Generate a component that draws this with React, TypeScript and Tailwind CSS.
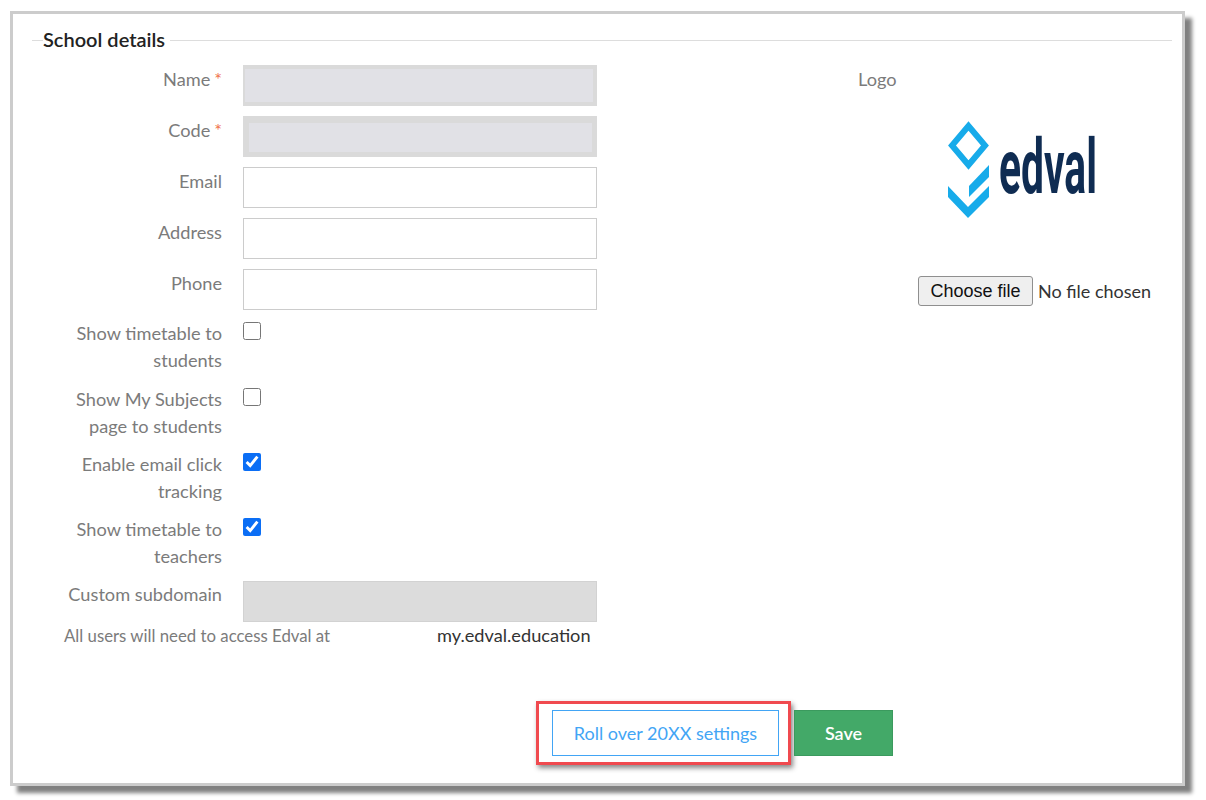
import React from 'react'

const textRows = [
  { label: 'Name', required: true, box: 'bg-[#e1e1e6] border-[#dadada] border-t-4 border-r-4 border-b-4 border-l-2' },
  { label: 'Code', required: true, box: 'bg-[#e1e1e6] border-[#dadada] border-t-[7px] border-r-[5px] border-b-[5px] border-l-[6px]' },
  { label: 'Email', box: 'bg-white border border-[#cccccc]' },
  { label: 'Address', box: 'bg-white border border-[#cccccc]' },
  { label: 'Phone', box: 'bg-white border border-[#cccccc]' },
]

const checkRows = [
  { label: 'Show timetable to students', checked: false, height: 'h-[66px]' },
  { label: 'Show My Subjects page to students', checked: false, height: 'h-[65px]' },
  { label: 'Enable email click tracking', checked: true, height: 'h-[65px]' },
  { label: 'Show timetable to teachers', checked: true, height: 'h-[65px]' },
]

function EdvalLogo() {
  return (
    <svg width="156" height="100" viewBox="0 0 156 100" className="block overflow-visible">
      <path d="M21.5 6 L38 25.5 L21.5 45 L5 25.5 Z" fill="none" stroke="#17abea" strokeWidth="6" />
      <path d="M42 45 L42 57 L22 77 L22 66 Z" fill="#17abea" />
      <path d="M1 66 L21 87 L42 66 L42 77 L21 98 L1 77 Z" fill="#17abea" />
      <text
        x="52"
        y="73"
        fontFamily="Roboto, Arial, sans-serif"
        fontSize="76"
        fontWeight="700"
        textLength="98"
        lengthAdjust="spacingAndGlyphs"
        fill="#0f2c52"
      >
        edval
      </text>
    </svg>
  )
}

export default function App() {
  return (
    <div className="w-[1206px] h-[800px] bg-white pt-[11px] pl-[10px] overflow-hidden font-['Lato',sans-serif]">
      <div className="w-[1175px] h-[775px] bg-white border-[3px] border-[#cccccc] shadow-[7px_7px_4px_#808080] flex flex-col">
        {/* Legend */}
        <div className="flex items-center h-[26px] mt-[13px] ml-[19px] mr-[10px]">
          <div className="w-[11px] h-px bg-[#dddddd]" />
          <span className="text-[20px] font-semibold text-[#222222] leading-[26px] pb-[2px]">School details</span>
          <div className="flex-1 h-px bg-[#dddddd] ml-[5px]" />
        </div>

        <div className="flex mt-[12px] pl-[49px]">
          {/* Form */}
          <div className="w-[535px] flex flex-col text-[18.2px] text-[#7b7b7b] leading-[27px]">
            {textRows.map((row) => (
              <div key={row.label} className="flex gap-[21px] h-[51px]">
                <div className="w-[160px] text-right pt-px">
                  {row.label}
                  {row.required && <span className="text-[#f0704a] ml-[4px]">*</span>}
                </div>
                <input readOnly className={`w-[354px] h-[41px] ${row.box}`} />
              </div>
            ))}

            {checkRows.map((row) => (
              <div key={row.label} className={`flex gap-[21px] ${row.height}`}>
                <div className="w-[160px] text-right">{row.label}</div>
                <input
                  type="checkbox"
                  readOnly
                  checked={row.checked}
                  className="w-[18px] h-[18px] m-0 mt-[2px] accent-[#0b6ef5]"
                />
              </div>
            ))}

            <div className="flex gap-[21px]">
              <div className="w-[160px] text-right">Custom subdomain</div>
              <div className="w-[354px] h-[41px] bg-[#dcdcdc] border border-[#d2d2d2]" />
            </div>

            <div className="flex items-center h-[27px]">
              <span className="w-[373px] ml-[2px] text-[16.8px]">All users will need to access Edval at</span>
              <span className="text-[#333333]">my.edval.education</span>
            </div>
          </div>

          {/* Logo column */}
          <div className="ml-[261px] flex flex-col text-[18.2px] leading-[27px] text-[#7b7b7b]">
            <div className="pt-px">Logo</div>
            <div className="ml-[89px] mt-[27px]">
              <EdvalLogo />
            </div>
            <div className="flex items-center ml-[60px] mt-[56px] h-[30px] w-[250px] text-[#333333]">
              <button className="w-[115px] h-[30px] bg-[#efefef] border border-[#8f8f8f] rounded-[3px] font-['Liberation_Sans',sans-serif] text-[18px] text-[#111111]">
                Choose file
              </button>
              <span className="ml-[5px] text-[18px]">No file chosen</span>
            </div>
          </div>
        </div>

        {/* Actions */}
        <div className="flex items-start ml-[523px] mt-[52px]">
          <div className="border-[3px] border-[#f04a4f] shadow-[2px_3px_5px_#888888] pl-[13px] pr-[9px] py-[6px]">
            <button className="block w-[227px] h-[46px] bg-white border border-[#42a5f5] text-[#42a5f5] text-[18px]">
              Roll over 20XX settings
            </button>
          </div>
          <button className="w-[99px] h-[46px] ml-[3px] mt-[9px] bg-[#43a968] border border-[#3b9a5e] text-white text-[18px] font-semibold">
            Save
          </button>
        </div>
      </div>
    </div>
  )
}
